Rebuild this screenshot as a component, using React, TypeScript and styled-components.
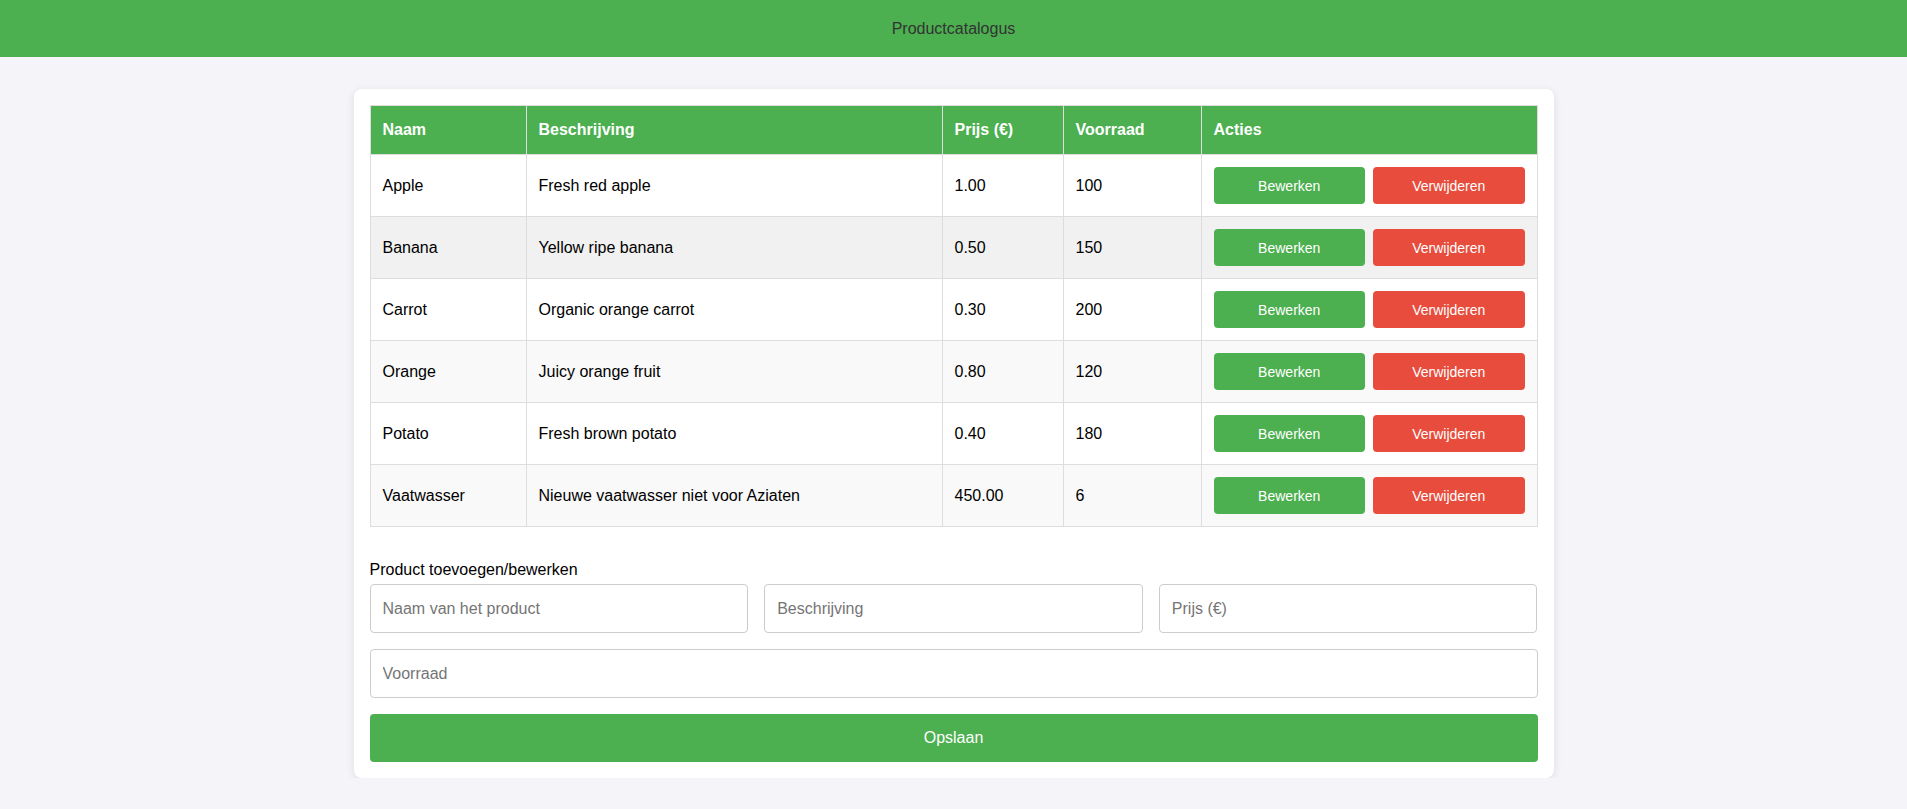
import styled, { createGlobalStyle } from "styled-components"

const GlobalStyle = createGlobalStyle`
  body {
    margin: 0;
    background-color: #f4f4f9;
    font-family: "Liberation Sans", Arial, sans-serif;
    color: #000;
  }
`

const Header = styled.header`
  height: 57px;
  background-color: #4caf50;
  color: #333;
  font-size: 16px;
  display: flex;
  align-items: center;
  justify-content: center;
`

const Card = styled.main`
  width: 1200px;
  box-sizing: border-box;
  margin: 32px auto 0;
  padding: 16px;
  background-color: white;
  border-radius: 8px;
  box-shadow: 0 2px 8px rgba(0, 0, 0, 0.1);
`

const Table = styled.table`
  width: 100%;
  border-collapse: collapse;
  table-layout: fixed;
  font-size: 16px;
`

const Th = styled.th<{ $width?: number }>`
  box-sizing: border-box;
  width: ${p => (p.$width ? `${p.$width}px` : "auto")};
  background-color: #4caf50;
  color: white;
  font-weight: bold;
  text-align: left;
  padding: 15px 12px;
  border: 1px solid #ddd;
  line-height: 18px;
`

const Row = styled.tr<{ $shade: string }>`
  background-color: ${p => p.$shade};
`

const Td = styled.td`
  padding: 12px;
  border: 1px solid #ddd;
  line-height: 18px;
  height: 37px;
`

const Actions = styled.div`
  display: flex;
  gap: 8px;
`

const ActionButton = styled.button<{ $danger?: boolean }>`
  flex: 1;
  height: 37px;
  border: none;
  border-radius: 4px;
  color: white;
  font-size: 14px;
  font-family: "Liberation Sans", Arial, sans-serif;
  background-color: ${p => (p.$danger ? "#e74c3c" : "#4caf50")};
  cursor: pointer;
`

const Form = styled.form`
  margin-top: 34px;
  display: flex;
  flex-direction: column;
  gap: 16px;
`

const FormTitle = styled.div`
  font-size: 16px;
  line-height: 18px;
  margin-bottom: -11px;
`

const FieldGrid = styled.div`
  display: grid;
  grid-template-columns: repeat(3, 1fr);
  gap: 16px;
`

const Field = styled.input`
  height: 49px;
  box-sizing: border-box;
  padding: 0 12px;
  border: 1px solid #ccc;
  border-radius: 4px;
  font-size: 16px;
  font-family: "Liberation Sans", Arial, sans-serif;
  &::placeholder {
    color: #757575;
  }
`

const SaveButton = styled.button`
  height: 48px;
  border: none;
  border-radius: 4px;
  background-color: #4caf50;
  color: white;
  font-size: 16px;
  font-family: "Liberation Sans", Arial, sans-serif;
  cursor: pointer;
`

const products = [
  { name: "Apple", description: "Fresh red apple", price: "1.00", stock: 100 },
  { name: "Banana", description: "Yellow ripe banana", price: "0.50", stock: 150 },
  { name: "Carrot", description: "Organic orange carrot", price: "0.30", stock: 200 },
  { name: "Orange", description: "Juicy orange fruit", price: "0.80", stock: 120 },
  { name: "Potato", description: "Fresh brown potato", price: "0.40", stock: 180 },
  { name: "Vaatwasser", description: "Nieuwe vaatwasser niet voor Aziaten", price: "450.00", stock: 6 },
]

const App = () => {
  return (
    <>
      <GlobalStyle />
      <Header>Productcatalogus</Header>
      <Card>
        <Table>
          <thead>
            <tr>
              <Th $width={156}>Naam</Th>
              <Th $width={416}>Beschrijving</Th>
              <Th $width={121}>Prijs (€)</Th>
              <Th $width={138}>Voorraad</Th>
              <Th>Acties</Th>
            </tr>
          </thead>
          <tbody>
            {products.map((p, i) => (
              // second row is the hovered one in the screenshot
              <Row key={p.name} $shade={i === 1 ? "#f1f1f1" : i % 2 === 1 ? "#f9f9f9" : "#fff"}>
                <Td>{p.name}</Td>
                <Td>{p.description}</Td>
                <Td>{p.price}</Td>
                <Td>{p.stock}</Td>
                <Td>
                  <Actions>
                    <ActionButton type="button">Bewerken</ActionButton>
                    <ActionButton type="button" $danger>Verwijderen</ActionButton>
                  </Actions>
                </Td>
              </Row>
            ))}
          </tbody>
        </Table>
        <Form onSubmit={e => e.preventDefault()}>
          <FormTitle>Product toevoegen/bewerken</FormTitle>
          <FieldGrid>
            <Field type="text" placeholder="Naam van het product" />
            <Field type="text" placeholder="Beschrijving" />
            <Field type="text" placeholder="Prijs (€)" />
          </FieldGrid>
          <Field type="text" placeholder="Voorraad" />
          <SaveButton type="submit">Opslaan</SaveButton>
        </Form>
      </Card>
    </>
  )
}

export default App
